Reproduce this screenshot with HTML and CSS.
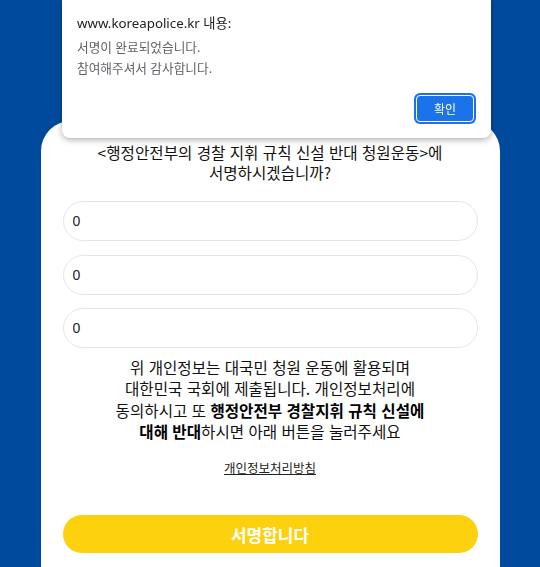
FILE: index.html
```html
<!DOCTYPE html>
<html lang="ko">
<head>
    <meta charset="UTF-8">
    <meta name="viewport" content="width=device-width, initial-scale=1.0">
    <title>경찰 지휘 규칙 신설 반대 청원</title>
    <link rel="stylesheet" href="styles.css">
</head>
<body>
    <!-- Browser alert -->
    <div class="alert">
        <div class="alert-title">www.koreapolice.kr 내용:</div>
        <div class="alert-message">서명이 완료되었습니다.<br>참여해주셔서 감사합니다.</div>
        <div class="alert-actions">
            <button class="alert-button">확인</button>
        </div>
    </div>

    <div class="page">
        <!-- Sign Card -->
        <div class="card">
            <div class="question">&lt;행정안전부의 경찰 지휘 규칙 신설 반대 청원운동&gt;에<br>서명하시겠습니까?</div>

            <form class="sign-form">
                <input class="field" type="text" value="0">
                <input class="field" type="text" value="0">
                <input class="field" type="text" value="0">

                <p class="notice">
                    위 개인정보는 대국민 청원 운동에 활용되며<br>
                    대한민국 국회에 제출됩니다. 개인정보처리에<br>
                    동의하시고 또 <strong>행정안전부 경찰지휘 규칙 신설에<br>
                    대해 반대</strong>하시면 아래 버튼을 눌러주세요
                </p>

                <a class="privacy-link" href="#">개인정보처리방침</a>

                <button class="sign-button" type="button">서명합니다</button>
            </form>
        </div>
    </div>
</body>
</html>
```

FILE: styles.css
```css
/* General Styling */
body {
    margin: 0;
    padding: 0;
    font-family: 'Malgun Gothic', 'Noto Sans CJK KR', sans-serif;
    background: #004a9d;
    color: #111;
    overflow: hidden;
}

/* Page */
.page {
    padding-top: 121px;
}

/* Card */
.card {
    width: 85%;
    margin: 0 auto;
    background: #fff;
    border-radius: 30px 30px 0 0;
    padding: 21px 22px 40px;
    box-sizing: border-box;
    min-height: 500px;
}
.question {
    font-size: 15.6px;
    line-height: 20px;
    text-align: center;
    color: #111;
}

/* Form */
.sign-form {
    display: flex;
    flex-direction: column;
    align-items: center;
    margin-top: 19px;
}
.field {
    width: 100%;
    height: 40px;
    box-sizing: border-box;
    border: 1px solid #e6e6e6;
    border-radius: 20px;
    padding: 0 9px;
    margin-bottom: 13.5px;
    font-family: 'Liberation Sans', Arial, sans-serif;
    font-size: 14px;
    color: #222;
    background: #fff;
    outline: none;
}
.field:last-of-type {
    margin-bottom: 0;
}
.notice {
    margin: 9px 0 0;
    font-size: 15.6px;
    line-height: 21.3px;
    text-align: center;
    color: #111;
}
.notice strong {
    font-weight: bold;
    color: #000;
}
.privacy-link {
    margin-top: 16.5px;
    font-size: 12.5px;
    line-height: 17px;
    color: #222;
    text-decoration: underline;
}
.sign-button {
    width: 100%;
    height: 38px;
    margin-top: 39.5px;
    border: none;
    border-radius: 19px;
    background: #fdd10d;
    color: #fff;
    font-family: 'Malgun Gothic', 'Noto Sans CJK KR', sans-serif;
    font-size: 17px;
    font-weight: bold;
    cursor: pointer;
}

/* Alert */
.alert {
    position: fixed;
    top: 0;
    left: 62px;
    width: 429px;
    box-sizing: border-box;
    padding: 13px 15px 14px;
    background: #fff;
    border-radius: 0 0 8px 8px;
    box-shadow: 0 2px 6px rgba(0, 0, 0, 0.3);
    font-family: 'Noto Sans', 'Noto Sans CJK KR', sans-serif;
    z-index: 10;
}
.alert-title {
    font-size: 13.3px;
    line-height: 20px;
    color: #202124;
}
.alert-message {
    margin-top: 3.5px;
    font-size: 12.7px;
    line-height: 21px;
    color: #5f6368;
}
.alert-actions {
    display: flex;
    justify-content: flex-end;
    margin-top: 14.5px;
}
.alert-button {
    width: 58px;
    height: 27px;
    margin: 2px;
    border: 1px solid #fff;
    border-radius: 4px;
    background: #1a73e8;
    box-shadow: 0 0 0 2px #1a73e8;
    color: #fff;
    font-family: 'Noto Sans', 'Noto Sans CJK KR', sans-serif;
    font-size: 12px;
    padding: 0;
}
```
